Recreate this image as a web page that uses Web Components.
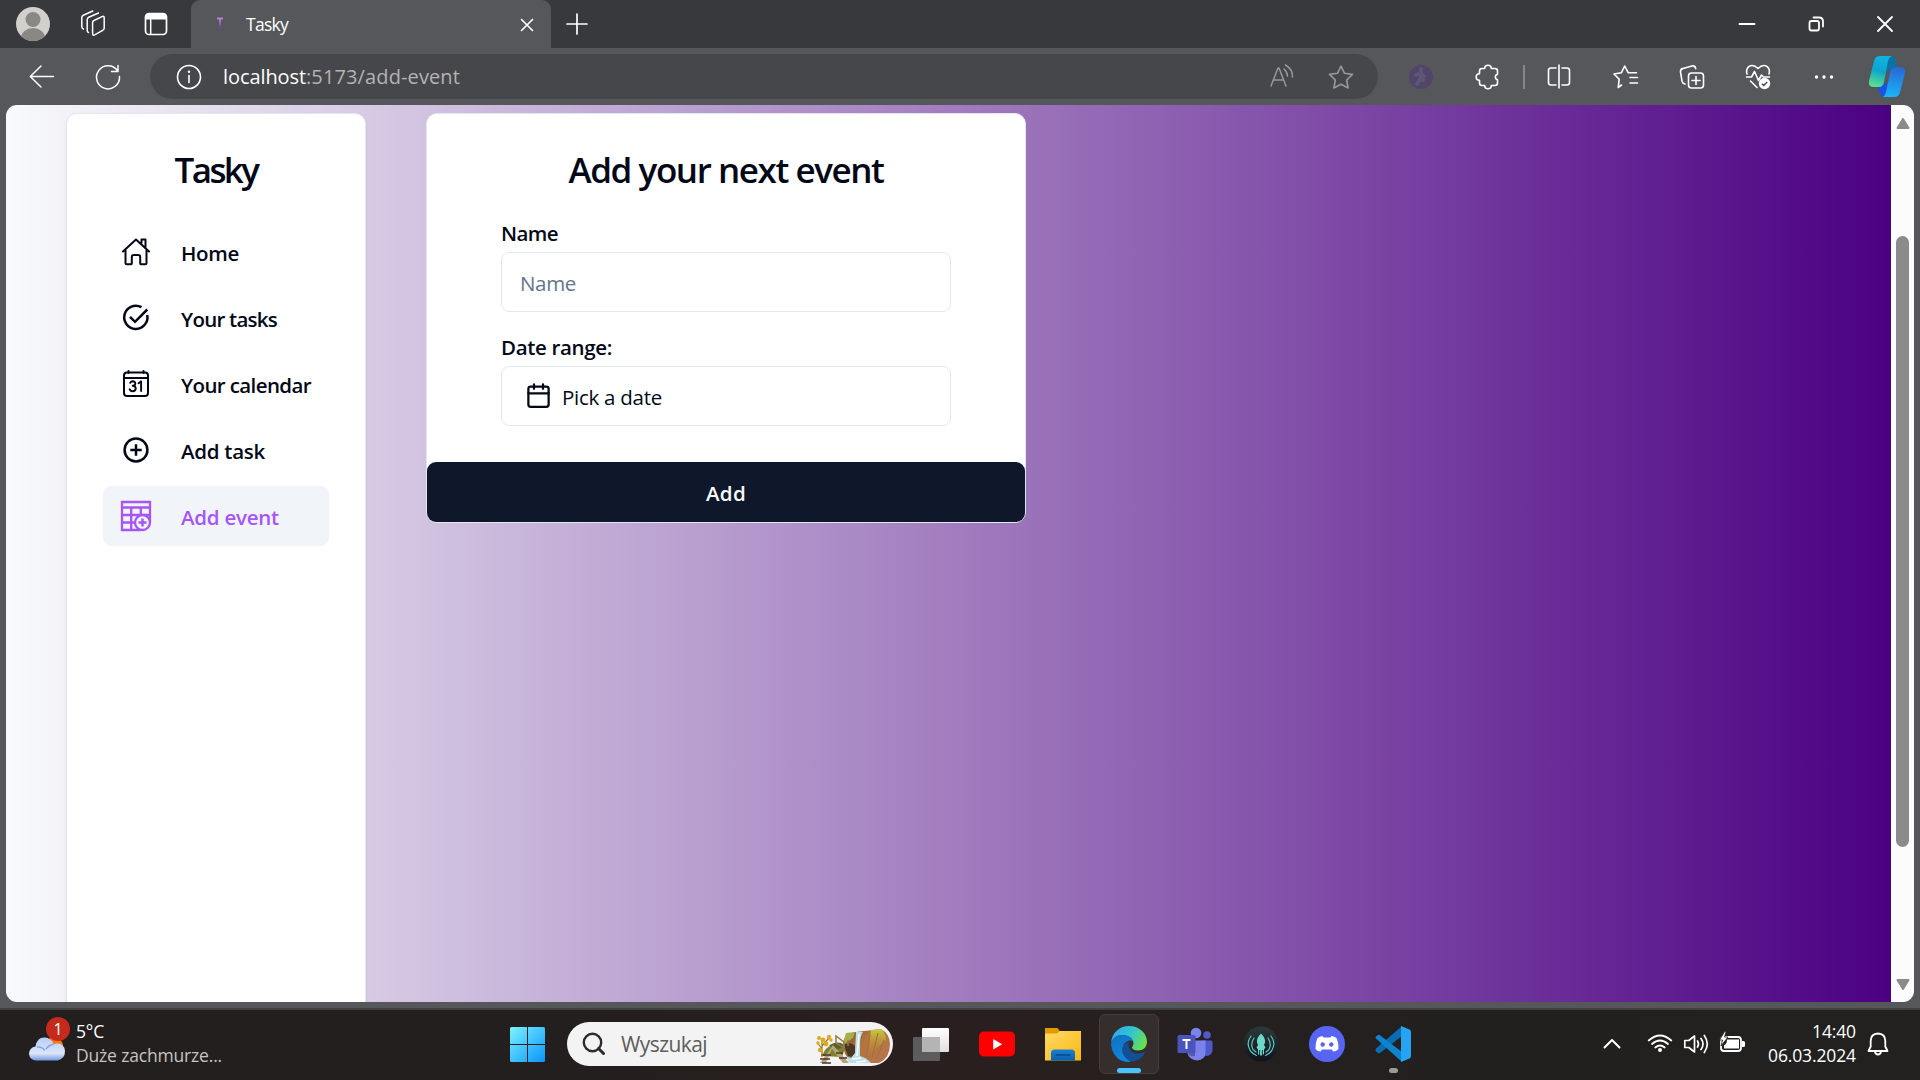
<!DOCTYPE html>
<html lang="pl">
<head>
<meta charset="utf-8">
<title>Tasky</title>
<style>
html,body{margin:0;width:1920px;height:1080px;overflow:hidden;background:#56575b;font-family:"Open Sans","Noto Sans",sans-serif;font-stretch:94%}
</style>
</head>
<body>
<desktop-screen></desktop-screen>
<script>
const I = {};
const S = 'fill="none" stroke="currentColor" stroke-linecap="round" stroke-linejoin="round"';
I.avatar = `<circle cx="20" cy="20" r="17" fill="#d2d0cd"/><clipPath id="c"><circle cx="20" cy="20" r="17"/></clipPath><ellipse cx="20" cy="15.5" rx="7.5" ry="7.5" fill="#8b8784"/><ellipse cx="20" cy="34" rx="12" ry="10" fill="#8b8784" clip-path="url(#c)"/>`;
I.spaces = `<g ${S} stroke-width="1.5"><path d="M21 16.500 29 12.600q2.200-.9 2.200 1.400v10q0 1.600-1.500 2.300l-7.600 4.400q-2.500 1.300-2.500-1.200V18.600q0-1.500 1.400-2.100z"/><path d="M15.500 28.500q-1.300-.3-1.300-1.900V15.500q0-1.500 1.500-2.200L25.500 9"/><path d="M10.400 25q-1.600-.5-1.600-2.200V13.600q0-1.600 1.500-2.300L19.800 7"/></g>`;
I.tabs = `<rect x="9.500" y="9.500" width="21" height="21" rx="3.500" ${S} stroke-width="1.700"/><path d="M9.500 15.500V13q0-3.500 3.500-3.500h14q3.500 0 3.500 3.500v2.500z" fill="currentColor"/><path d="M14.700 15v15" ${S} stroke-width="1.500"/>`;
I.fav = `<linearGradient id="g" x2="0" y2="1"><stop stop-color="#b986d8"/><stop offset="1" stop-color="#70459a"/></linearGradient><path d="M17 13.500h6v2h-2v6.500h-2v-6.500h-2zM17.500 23.500h5.500v1h-5.500z" fill="url(#g)"/>`;
I.x = `<path d="M14.500 14.500l11 11M25.500 14.500l-11 11" ${S} stroke-width="1.700"/>`;
I.plus = `<path d="M20 10v20M10 20h20" ${S} stroke-width="1.700"/>`;
I.min = `<path d="M12.500 20h15" ${S} stroke-width="1.900" stroke-linecap="butt"/>`;
I.restore = `<g ${S} stroke-width="1.800"><rect x="13.500" y="17" width="9.500" height="9.500" rx="2"/><path d="M17.500 13.500h5.500q4 0 4 4v5"/></g>`;
I.close = `<path d="M13 13l14 14M27 13L13 27" ${S} stroke-width="1.800"/>`;
I.back = `<path d="M31.500 19.500H8.500M19 9L8.300 19.500 19 30" ${S} stroke-width="1.500"/>`;
I.reload = `<path d="M29.500 13.800A11.500 11.500 0 1 0 31.500 19.500M30 8.500v6h-6.500" ${S} stroke-width="1.500"/>`;
I.info = `<g ${S} stroke-width="1.600"><circle cx="20" cy="20" r="11.500"/><path d="M20 18.500v7"/></g><circle cx="20" cy="14.800" r="1.200" fill="currentColor"/>`;
I.read = `<g ${S} stroke-width="1.500"><path d="M10 30l7-18h1l7 18M12.500 24h10M23 13q3.500 3 3.500 7M24.500 9q7.500 4.500 7 12"/></g>`;
I.star = `<path d="M20 9l3.500 7.300 8 1.100-5.800 5.600 1.400 8L20 27.200 12.900 31l1.400-8-5.800-5.600 8-1.100z" ${S} stroke-width="1.600"/>`;
I.ext = `<circle cx="20" cy="20" r="12" fill="#51456a"/><g fill="none" stroke="#5f5575" stroke-width="4" stroke-linecap="round"><path d="M20 14v7l-4 6M20 17l3 2M15 18l5-2M20 21l2 2"/></g><circle cx="20" cy="12" r="2" fill="#5f5575"/>`;
I.puzzle = `<path d="M16.700 11.500a3.300 3.300 0 0 1 6.600 0h3.700q2.500 0 2.500 2.500v3.200a2.900 2.900 0 0 0 0 5.600V26q0 2.500-2.500 2.500h-3.700a3.300 3.300 0 0 1-6.600 0H14q-2.500 0-2.500-2.500v-2.700a3.300 3.300 0 0 1 0-6.600V14q0-2.500 2.500-2.500z" ${S} stroke-width="1.600"/>`;
I.split = `<g ${S} stroke-width="1.600"><path d="M17 11h-5q-2.500 0-2.500 2.500v12q0 2.500 2.500 2.500h5M23 11h5q2.500 0 2.500 2.500v12q0 2.500-2.500 2.500h-5M20 8v23"/></g>`;
I.favs = `<path d="M15.500 28l-3.300 2.500 1-8.200-5.200-5.300 7.300-1.200 3.400-6.800 3.600 6.800h8.200M24 20.500h7.500M24 26h7.500M19 27" ${S} stroke-width="1.600"/>`;
I.coll = `<g ${S} stroke-width="1.600"><rect x="16.500" y="16" width="15" height="15" rx="3"/><path d="M24 19.500v8M20 23.500h8M13 27q-2.500-.5-3-2.800L8.500 15q-.3-3 2.500-3.600L20 9q3-.5 3.700 2.500"/></g>`;
I.heart = `<g ${S} stroke-width="1.600"><path d="M9 17q-1.300-4.500 1.500-7.200 4.500-3.300 9.500 1.700 5-5 9.500-1.700 2.800 2.700 1.500 7.200M8.500 20h5l3-5.500 4 9 3-5.500 2 2h6M12.500 24l6.500 6.500"/></g><circle cx="26.500" cy="26.500" r="5.700" fill="#fff"/><path d="M24 26.700l1.800 1.800 3.400-3.500" fill="none" stroke="#45464a" stroke-width="1.400"/>`;
I.dots = `<g fill="currentColor"><circle cx="12.500" cy="20" r="1.700"/><circle cx="20" cy="20" r="1.700"/><circle cx="27.500" cy="20" r="1.700"/></g>`;
I.copilot = `<linearGradient id="a" x1=".6" y1="0" x2=".4" y2="1"><stop stop-color="#0db4e4"/><stop offset=".5" stop-color="#0fa5cd"/><stop offset="1" stop-color="#5be08a"/></linearGradient><linearGradient id="b" x1=".5" y1="0" x2=".4" y2="1"><stop stop-color="#2a66d4"/><stop offset="1" stop-color="#18b6fb"/></linearGradient><path d="M16 0h7q2.500.2 3.500 4l2 8h-5q-3 0-4 4l-5-2z" fill="#0b72a8"/><path d="M8 31q5-.5 6-4l6 1-4 13q-4 0-5-4z" fill="#1b55dd"/><path d="M11 0h12q-3 1-4 5l-4 21q-1 5-5 5H5q-6 0-5-6L5 5Q6 0 11 0z" fill="url(#a)"/><path d="M25 41H14q2-1 3-5l4-19q1-6 5-6h5q6 0 5 6l-5 19q-1 5-6 5z" fill="url(#b)"/>`;
/* Application icons, 30 x 30 */
I.home = `<g ${S} stroke-width="2"><path d="M2 14.500L15 2.500l13 12M4.500 13v13q0 1.300 1.300 1.300H10q.8 0 .8-.8V20q0-2 2-2h4.400q2 0 2 2v6.500q0 .8.800.8h4.200q1.300 0 1.300-1.300V13M20.500 6V2.500h4V10"/></g>`;
I.tasks = `<g fill="none" stroke="currentColor" stroke-width="2.500"><path d="M20.500 4.200A11.600 11.600 0 1 0 26.200 12"/><path d="M9 13.800l5 5L26.300 6.500"/></g>`;
I.calendar = `<g ${S} stroke-width="2"><rect x="3" y="3.500" width="24" height="23.500" rx="3"/><path d="M3.500 9h23M7.500 2v2M22.500 2v2"/><path d="M9.200 13.800q.7-1.600 2.500-1.600 2.600.1 2.600 2.300 0 2.200-2.600 2.300 3 .1 3 2.800-.2 2.400-3 2.600-2.400 0-3-2M17.500 14.200l2.600-1.800V22" stroke-width="1.900"/></g>`;
I.add = `<g ${S} stroke-width="2.500"><circle cx="15" cy="15" r="11.400"/><path d="M15 9.300v11.400M9.300 15h11.400" stroke-linecap="butt"/></g>`;
I.event = `<g fill="none" stroke="currentColor" stroke-width="2.300"><path d="M20 29H1V1h28v20M1 6.500h28M1 14h28M1 21.500h14M10.200 6.500V29M19.800 6.500V15"/><circle cx="21.500" cy="21.500" r="7.500" fill="#f1f5f9"/><path d="M21.500 17.500v8M17.500 21.500h8" stroke-width="2.400"/></g>`;
I.cal2 = `<g ${S} stroke-width="2"><rect x="3" y="4" width="18" height="18" rx="2"/><path d="M8 2v4M16 2v4M3 10h18"/></g>`;
/* Task bar icons */
I.win = `<linearGradient id="w" gradientUnits="userSpaceOnUse" x1="0" y1="0" x2="35" y2="35"><stop stop-color="#7bf4ff"/><stop offset="1" stop-color="#0a93fb"/></linearGradient><path d="M1.500 0H17v17H0V1.500Q0 0 1.500 0zM18 0h15.500Q35 0 35 1.500V17H18zM0 18h17v17H1.500Q0 35 0 33.500zM18 18h17v15.500q0 1.500-1.500 1.500H18z" fill="url(#w)"/>`;
I.search = `<g fill="none" stroke="#2b2c30" stroke-width="2.400"><circle cx="9.500" cy="9.500" r="8.700"/><path d="M15.500 15.500l5 5" stroke-width="3" stroke-linecap="round"/></g>`;
I.scene = `<linearGradient id="m" x1="0" x2="1" y2=".6"><stop stop-color="#7a4827"/><stop offset=".5" stop-color="#b4763d"/><stop offset="1" stop-color="#b57549"/></linearGradient><linearGradient id="n" x2="0" y2="1"><stop stop-color="#c9cf3c"/><stop offset="1" stop-color="#b98c37" stop-opacity="0"/></linearGradient>
<path d="M27 16Q28 5 40 4l25-3q9 5 9 15 0 14-11 19H36q-9-8-9-19z" fill="url(#m)"/><path d="M55 2l10-1q5 4 5 11L56 25l-4 2z" fill="url(#n)"/><path d="M30 5l9-1-2 6-11 8z" fill="#a6b044"/><path d="M54 7l-4 22M62 5l-6 24M68 12l-8 20" stroke="#a66c38" stroke-width="1"/><path d="M28 17q7-4 11 1l1 12-8-2z" fill="#4d3522"/><path d="M40 4h7q-3 4-3 12v12q7 2 11 7H34q-3-4-6-7l7 2 4-5z" fill="#b9e1ee"/><path d="M43 6l-2 22M36 31l9-1M40 34l10-1" stroke="#fff" stroke-width="1.500"/>
<path d="M6 28q3-10 15-13 8 0 8 5l-3 9z" fill="#78822d"/><path d="M13 18q5-5 12-3l3 4-6 2z" fill="#536327"/><path d="M17 17l16 18h-6L16 21l-6 14H4z" fill="#baa078"/><path d="M5 27h10M4 31h10M6 35h9M20 25h7M23 30h8" stroke="#4a3929" stroke-width="1.500"/><path d="M20 8v7l8 5v-6zM32 12v6" fill="none" stroke="#927850" stroke-width="1.500"/>
<path d="M6 29V12M6 21L1 14M6 18l7-8" stroke="#9a7720" stroke-width="1.200"/><g fill="#e0a820"><circle cx="3" cy="10" r="2"/><circle cx="7" cy="12" r="2.400"/><circle cx="13" cy="9" r="2.200"/><circle cx="2" cy="15" r="1.700"/><circle cx="10" cy="16" r="2.400"/><circle cx="4" cy="22" r="2.200"/><circle cx="15" cy="12" r="1.700"/></g>`;
I.view = `<linearGradient id="v" x2="0" y2="1"><stop stop-color="#fff"/><stop offset="1" stop-color="#e0e0e0"/></linearGradient><rect x="9" y="2" width="27" height="24" rx="1" fill="url(#v)"/><path d="M0 12q0-1 1-1h8v15h18v8q0 1-1 1H1q-1 0-1-1z" fill="#5c5c5c"/><path d="M9 11h18v15H9z" fill="#b4b4b4"/>`;
I.yt = `<rect y="5.500" width="36" height="25" rx="5" fill="#f00"/><path d="M14.200 13v10.600l9-5.300z" fill="#fff"/>`;
I.folder = `<linearGradient id="f" x2="1" y2="1"><stop stop-color="#ffd969"/><stop offset="1" stop-color="#f9b80e"/></linearGradient><linearGradient id="k" x2="0" y2="1"><stop stop-color="#1681d6"/><stop offset="1" stop-color="#0d5fae"/></linearGradient><path d="M0 2h12q1.500 0 2.500 3v5H0z" fill="#df9b00"/><path d="M0 7.500h11q2 0 3.500-2.500H36v29.500H0z" fill="url(#f)"/><path d="M6 34.500V27q0-3.500 3.500-3.500h17Q30 23.500 30 27v7.500z" fill="url(#k)"/><path d="M10.500 29h15" stroke="#084c88" stroke-width="1.600"/>`;
I.edge = `<linearGradient id="e" x1="0" y1=".2" x2="1" y2=".6"><stop stop-color="#2fa8ea"/><stop offset=".5" stop-color="#30c4d3"/><stop offset="1" stop-color="#6be04d"/></linearGradient><linearGradient id="h" x2=".4" y2="1"><stop stop-color="#1271c2"/><stop offset="1" stop-color="#0f86df"/></linearGradient><path d="M0 17C1 6 9 0 18 0c11 0 18 8 18 15.500 0 6-4 9-9 9-4 0-6-1.500-6-3 0-1 1.500-1.500 1.500-4 0-4-4-8.500-11-8.500C6 9 1.500 12 0 17z" fill="url(#e)"/><path d="M0 17c2-6 7-8.500 12-8 6 .5 9 3 10 6q-5-2-9 3c-4 6 1 14 7 17.800Q9 37 3.500 28.500 0 23 0 17z" fill="url(#h)"/><path d="M13 18c-5 8 2 18 10 17 5-.5 9-4 10.500-8 .3-1-.2-1.200-1-.6-3 1.600-7.500 1.600-11-.4-3.500-2-4.500-5-3.500-9.500q-3-.5-5 1.500z" fill="#124f96"/>`;
I.teams = `<circle cx="19" cy="7" r="5.300" fill="#7b83eb"/><circle cx="30" cy="9" r="3.800" fill="#5059c9"/><path d="M24 14.500h10q1.500 0 1.500 1.500v8.500q-1 5-6 5.500-5-.5-5.500-5z" fill="#5059c9"/><path d="M10 14.500h18.500V26q0 8-8.500 8.500-8-.5-10-8.500z" fill="#7b83eb"/><path d="M18 15v15q-5 1-7-3V15z" fill="#515bb0"/><rect x=".5" y="9" width="18" height="18" rx="1.500" fill="#4b53bc"/><path d="M5.500 13h8v2h-3v8h-2v-8h-3z" fill="#fff"/>`;
I.kraken = `<linearGradient id="q" x2="0" y2="1"><stop stop-color="#2b3a3b"/><stop offset="1" stop-color="#10131c"/></linearGradient><circle cx="18" cy="18" r="17.500" fill="url(#q)"/><path d="M18 7.500q5 5 4 9l-1 2.500 1.500 2.500-1.500 2v5h-1.200v-4.500h-.9v5.500h-1.800V24h-.9v4.500H15v-5l-1.500-2L15 19l-1-2.500q-1-4 4-9z" fill="#6cd8ca"/><path d="M8 10Q2.500 17.500 7.500 25q3 3.500 6 4.500M28 10q5.500 7.500.5 15-3 3.500-6 4.500M11 12q-4 5.500-1 11.500l3 2.500M25 12q4 5.500 1 11.500l-3 2.500" fill="none" stroke="#5ec4ba" stroke-width="1.200" stroke-linecap="round"/>`;
I.discord = `<circle cx="18" cy="18" r="18" fill="#5865f2"/><path d="M13.500 10l1 1.500h7l1-1.500q3 .5 5 2 2.500 5 2 11-2.500 2.500-5.500 2.500L23 23.500H13L11.500 25.500Q8.500 25.500 6.500 23q-.5-6 2-11 2-1.500 5-2z" fill="#fff"/><circle cx="13.700" cy="18.500" r="2.200" fill="#5865f2"/><circle cx="22.300" cy="18.500" r="2.200" fill="#5865f2"/>`;
I.vscode = `<path d="M1 22.500Q0 24 1 25.500l2 1.500q1 .5 2 0L27 10V0z" fill="#0a6cb5"/><path d="M1 12.500Q0 11.500 1 10.500L3 9q1-.6 2 .2L27 26v10z" fill="#0c85d1"/><path d="M26 0l8.500 3.500Q36 4.300 36 6v24q0 1.700-1.500 2.500L26 36z" fill="#26a3f2"/>`;
I.cloud = `<linearGradient id="cl" x2="0" y2="1"><stop stop-color="#b7cef5"/><stop offset=".7" stop-color="#dbe6fa"/><stop offset="1" stop-color="#7199df"/></linearGradient><circle cx="25" cy="9" r="9" fill="#f9790f"/><path d="M7.500 23.500A7 7 0 0 1 6.500 9.500Q8 0 16 .5 22 1 24.500 7 35 4.500 36 14q0 8-7.500 9.500z" fill="url(#cl)"/><path d="M8 10q5-.5 8 3.500M17 12q3-4 8-5" fill="none" stroke="#86a8e6" stroke-width="1.500"/>`;
I.chev = `<path d="M12.500 23.500L20 16l7.500 7.500" ${S} stroke-width="2"/>`;
I.wifi = `<g ${S} stroke-width="1.800"><path d="M8.700 16.500q11.300-10 22.600 0M12 20q8-7 16 0M15.300 23.500q4.700-4 9.400 0"/></g><circle cx="20" cy="26" r="2" fill="currentColor"/>`;
I.sound = `<g ${S} stroke-width="1.700"><path d="M8.800 16.500h4L18.500 12v16l-5.700-4.500h-4zM21.500 17q2 3 0 6M25 14.500q4 5.500 0 11M28.300 11.500q6 8.500 0 17"/></g>`;
I.battery = `<rect x="9" y="13" width="20" height="14" rx="3" ${S} stroke-width="1.800"/><path d="M15 15.500h12v9H12v-3q3-1.500 3-6zM30 17h1.500q1.500 0 1.500 1.500v3q0 1.500-1.500 1.500H30z" fill="currentColor"/><path d="M13 7l-5.500 9h3L9 22l7-9h-3.500L14 8z" fill="currentColor" stroke="#22201f" stroke-width=".8"/>`;
I.bell = `<g ${S} stroke-width="1.800"><path d="M20 9.500q-7.300.4-7.300 7.500v5.500L10.500 27h19l-2.200-4.500V17q0-7.100-7.300-7.500zM17 27.500q.5 3 3 3t3-3"/></g>`;

const define = (name, html, setup) => customElements.define(name, class extends HTMLElement {
  constructor() {
    super();
    const t = document.createElement('template');
    t.innerHTML = html;
    this.attachShadow({mode: 'open'}).append(t.content.cloneNode(true));
  }
  connectedCallback() { if (setup) setup(this); }
});

define('ui-icon', `<style>:host{display:block;flex:none;width:40px;height:40px}svg{display:block;width:100%;height:100%;overflow:visible}</style><svg></svg>`, el => {
  const svg = el.shadowRoot.querySelector('svg');
  svg.setAttribute('viewBox', el.getAttribute('box') || '0 0 40 40');
  svg.innerHTML = I[el.getAttribute('name')] || '';
});

/* A line of text whose tracking is set so that it takes up the given width. */
define('fit-text', `<style>:host{display:block;flex:none;white-space:nowrap}span{display:inline-block}</style><span><slot></slot></span>`, el => {
  const s = el.shadowRoot.querySelector('span'), w = +el.getAttribute('w');
  s.style.letterSpacing = (w - s.getBoundingClientRect().width) / el.textContent.length + 'px';
  el.style.width = w + 'px';
});

define('tab-strip', `<style>
:host{display:flex;align-items:center;height:48px;background:#38393d;color:#fff}
.tab{display:flex;align-items:center;width:360px;height:48px;margin-left:15px;background:#56575b;border-radius:9px 9px 0 0;box-sizing:border-box}
fit-text{font-size:17.500px;line-height:24px;margin:-1px 0 0 6px}
</style>
<ui-icon name="avatar" style="margin-left:13px"></ui-icon><ui-icon name="spaces" style="margin-left:20px"></ui-icon><ui-icon name="tabs" style="margin-left:23px"></ui-icon>
<div class="tab"><ui-icon name="fav" style="margin-left:9px"></ui-icon><fit-text w="42">Tasky</fit-text><ui-icon name="x" style="margin:1px 4px 0 auto"></ui-icon></div>
<ui-icon name="plus" style="margin:-1px 0 0 6px"></ui-icon>
<ui-icon name="min" style="margin:-1px 0 0 auto"></ui-icon><ui-icon name="restore" style="margin-left:29px"></ui-icon><ui-icon name="close" style="margin:-1px 15px 0 29px"></ui-icon>`);

define('tool-bar', `<style>
:host{display:flex;align-items:center;height:57px;background:#56575b;color:#fff}
.url{display:flex;align-items:center;width:1228px;height:45px;border-radius:23px;background:#46474a;margin:0 23px 0 22px;font-size:20px}
fit-text{line-height:30px}.p{color:#b3b3b5}.dim{color:#97989a}.sep{width:1.500px;height:24px;background:#85868a}
</style>
<ui-icon name="back" style="margin-left:22px"></ui-icon><ui-icon name="reload" style="margin-left:26px"></ui-icon>
<div class="url"><ui-icon name="info" style="margin:0 14px 0 19px"></ui-icon><fit-text w="83">localhost</fit-text><fit-text class="p" w="154">:5173/add-event</fit-text><ui-icon class="dim" name="read" style="margin:-2px 0 0 auto"></ui-icon><ui-icon class="dim" name="star" style="margin:0 17px 0 20px"></ui-icon></div>
<ui-icon name="ext"></ui-icon><ui-icon name="puzzle" style="margin-left:27px"></ui-icon><div class="sep" style="margin:0 14px 0 15px"></div>
<ui-icon name="split"></ui-icon><ui-icon name="favs" style="margin-left:27px"></ui-icon><ui-icon name="coll" style="margin-left:26px"></ui-icon><ui-icon name="heart" style="margin-left:26px"></ui-icon><ui-icon name="dots" style="margin-left:26px"></ui-icon><ui-icon name="copilot" box="0 0 36 41" style="margin-left:25px;width:36px;height:41px"></ui-icon>`);

define('nav-item', `<style>
:host{display:flex;align-items:center;height:60px;padding-left:18px;border-radius:8px;font-size:20.500px;font-weight:580;line-height:30px;color:#020817;box-sizing:border-box}
:host([active]){background:#f1f5f9;color:#a855f7}
ui-icon{width:30px;height:30px;margin-right:30px}
slot{display:block;padding-top:2px}
</style><ui-icon box="0 0 30 30"></ui-icon><slot></slot>`, el => {
  const i = el.shadowRoot.querySelector('ui-icon');
  i.setAttribute('name', el.getAttribute('icon'));
  i.replaceWith(i.cloneNode(true));
});

define('side-bar', `<style>
:host{display:block;flex:none;width:300px;height:920px;box-sizing:border-box;background:#fff;border:1px solid #e2e8f0;border-radius:11px;padding:35px 36px 0;box-shadow:0 1px 3px #0001}
h1{margin:0 0 31px;height:42px;font-size:35px;line-height:42px;font-weight:560;color:#020817;display:flex;justify-content:center}
nav{display:flex;flex-direction:column;gap:6px}
</style>
<h1><fit-text w="83">Tasky</fit-text></h1>
<nav><nav-item icon="home"><fit-text w="58">Home</fit-text></nav-item><nav-item icon="tasks"><fit-text w="96">Your tasks</fit-text></nav-item><nav-item icon="calendar"><fit-text w="130">Your calendar</fit-text></nav-item><nav-item icon="add"><fit-text w="84">Add task</fit-text></nav-item><nav-item icon="event" active><fit-text w="98">Add event</fit-text></nav-item></nav>`);

define('event-form', `<style>
:host{display:block;flex:none;width:600px;height:410px;box-sizing:border-box;background:#fff;border:1px solid #e2e8f0;border-radius:11px;color:#020817;font-size:20.500px;line-height:30px}
h1{margin:0;padding-top:35px;height:42px;font-size:35px;line-height:42px;font-weight:560;display:flex;justify-content:center}
.body{display:flex;flex-direction:column;padding:27px 74px 0}
.label{font-weight:580;height:30px}
.field{display:flex;align-items:center;height:60px;box-sizing:border-box;border:1px solid #e2e8f0;border-radius:8px;margin:4px 0 20px}
.field fit-text{padding-top:1px}
.ph{color:#64748b;margin-left:18px}
.btn{display:flex;align-items:center;justify-content:center;height:60px;margin-top:16px;border-radius:9px;background:#0f172a;color:#f8fafc;font-weight:580}
.btn fit-text{padding-top:1px}
</style>
<h1><fit-text w="315">Add your next event</fit-text></h1>
<div class="body"><fit-text class="label" w="57">Name</fit-text><div class="field"><fit-text class="ph" w="56">Name</fit-text></div>
<fit-text class="label" w="111">Date range:</fit-text><div class="field"><ui-icon name="cal2" box="0 0 24 24" style="width:27px;height:27px;margin:-2px 10px 0 23px"></ui-icon><fit-text w="100">Pick a date</fit-text></div></div>
<div class="btn"><fit-text w="40">Add</fit-text></div>`);

define('scroll-bar', `<style>
:host{display:flex;flex-direction:column;align-items:center;flex:none;width:23px;background:#fcfcfc}
.thumb{width:13px;height:611px;border-radius:7px;background:#8b8b8b;margin:107px 0 auto}
svg{display:block;width:14px;height:11px;flex:none}
</style><svg viewBox="0 0 14 11" style="margin-top:13px"><path d="M7 1l5.500 9h-11z" fill="#8b8b8b" stroke="#8b8b8b" stroke-width="2" stroke-linejoin="round"/></svg><div class="thumb"></div><svg viewBox="0 0 14 11" style="margin-bottom:12px"><path d="M7 10L1.500 1h11z" fill="#8b8b8b" stroke="#8b8b8b" stroke-width="2" stroke-linejoin="round"/></svg>`);

define('page-view', `<style>
:host{display:flex;width:1908px;height:897px;margin-left:6px;border-radius:11px;overflow:hidden}
.page{display:flex;flex:1;align-items:flex-start;gap:60px;padding:8px 0 0 60px;background:linear-gradient(90deg,#f8fafc,#4b0082)}
</style><div class="page"><side-bar></side-bar><event-form></event-form></div><scroll-bar></scroll-bar>`);

define('task-bar', `<style>
:host{display:flex;align-items:center;height:72px;padding-bottom:2px;box-sizing:border-box;border-top:2px solid #42413f;background:linear-gradient(90deg,#231f1f,#231f1e 30%,#291f1e 48%,#26201f 60%,#22201f 75%,#232120);color:#fff;font-size:17.500px;line-height:24px}
.weather{position:relative;flex:none;width:36px;height:24px;margin:9px 11px 0 29px}
.badge{position:absolute;left:17px;top:-20px;width:24px;height:24px;border-radius:12px;background:#c42b1c;text-align:center;font-size:16px;line-height:24px}
.lines{display:flex;flex-direction:column;margin-top:-2px}
.sub{color:#c6c3c2}
.app{display:flex;align-items:center;justify-content:center;flex:none;width:60px;height:60px;box-sizing:border-box;position:relative;border-radius:6px}
.app ui-icon{width:36px;height:36px}
.apps{display:flex;gap:6px;margin-left:8px}
.on{background:#352e2d;border:1px solid #443d3c}
.on::after,.run::after{content:"";position:absolute;left:17px;bottom:0;width:24px;height:5px;border-radius:3px;background:#4cc2ff}
.run::after{left:26px;bottom:1px;width:9px;background:#9a9a9a}
.search{display:flex;align-items:center;flex:none;width:326px;height:44px;border-radius:22px;margin-left:10px;background:#f3f3f3;color:#5d5d5d;font-size:21px;line-height:30px}
</style>
<div class="weather"><ui-icon name="cloud" box="0 0 36 24" style="width:36px;height:24px"></ui-icon><span class="badge">1</span></div>
<div class="lines"><fit-text w="28">5°C</fit-text><fit-text class="sub" w="146">Duże zachmurze...</fit-text></div>
<div class="app" style="margin-left:275px"><ui-icon name="win" box="0 0 35 35" style="width:35px;height:35px"></ui-icon></div>
<div class="search"><ui-icon name="search" box="0 0 23 23" style="width:23px;height:23px;margin:0 15px 0 16px"></ui-icon><fit-text w="86">Wyszukaj</fit-text><ui-icon name="scene" box="0 0 75 36" style="width:75px;height:36px;margin:4px 2px 0 auto"></ui-icon></div>
<div class="apps">
<div class="app"><ui-icon name="view" box="0 0 36 36"></ui-icon></div><div class="app"><ui-icon name="yt" box="0 0 36 36"></ui-icon></div><div class="app"><ui-icon name="folder" box="0 0 36 36"></ui-icon></div><div class="app on"><ui-icon name="edge" box="0 0 36 36"></ui-icon></div><div class="app"><ui-icon name="teams" box="0 0 36 36"></ui-icon></div><div class="app"><ui-icon name="kraken" box="0 0 36 36"></ui-icon></div><div class="app"><ui-icon name="discord" box="0 0 36 36"></ui-icon></div><div class="app run"><ui-icon name="vscode" box="0 0 36 36"></ui-icon></div>
</div>
<ui-icon name="chev" style="margin-left:auto"></ui-icon><ui-icon name="wifi" style="margin-left:8px"></ui-icon><ui-icon name="sound" style="margin-left:-4px"></ui-icon><ui-icon name="battery" style="margin-left:-4px"></ui-icon>
<div class="lines" style="align-items:flex-end;margin-left:16px"><fit-text w="44">14:40</fit-text><fit-text w="88">06.03.2024</fit-text></div>
<ui-icon name="bell" style="margin:0 22px 0 2px"></ui-icon>`);

define('desktop-screen', `<style>
:host{display:flex;flex-direction:column;width:1920px;height:1080px;background:#56575b}
page-view{margin-bottom:6px}
</style><tab-strip></tab-strip><tool-bar></tool-bar><page-view></page-view><task-bar></task-bar>`);
</script>
</body>
</html>
